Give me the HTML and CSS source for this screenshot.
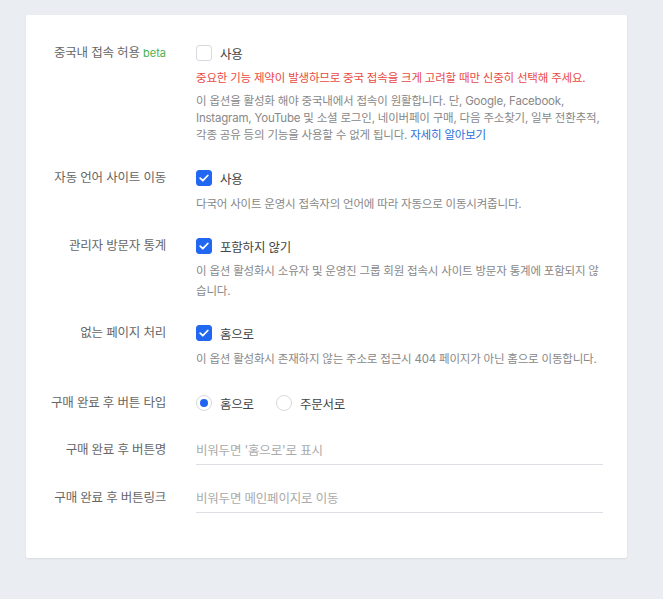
FILE: index.html
```html
<!DOCTYPE html>
<html lang="ko">
<head>
<meta charset="utf-8">
<link rel="stylesheet" href="styles.css">
</head>
<body>
<div class="page">
  <div class="card">
    <div class="row r1">
      <div class="label">중국내 접속 허용 <span class="beta">beta</span></div>
      <div class="control">
        <label class="check"><span class="box"></span><span class="ctext">사용</span></label>
        <p class="warn">중요한 기능 제약이 발생하므로 중국 접속을 크게 고려할 때만 신중히 선택해 주세요.</p>
        <p class="desc tight">이 옵션을 활성화 해야 중국내에서 접속이 원활합니다. 단, Google, Facebook, Instagram, YouTube 및 소셜 로그인, 네이버페이 구매, 다음 주소찾기, 일부 전환추적, 각종 공유 등의 기능을 사용할 수 없게 됩니다. <a class="link" href="#">자세히 알아보기</a></p>
      </div>
    </div>
    <div class="row r2">
      <div class="label">자동 언어 사이트 이동</div>
      <div class="control">
        <label class="check"><span class="box on"><svg viewBox="0 0 16 16" width="16" height="16"><path d="M4.2 8.2l2.6 2.5 5-5.2" fill="none" stroke="#fff" stroke-width="1.8" stroke-linecap="round" stroke-linejoin="round"/></svg></span><span class="ctext">사용</span></label>
        <p class="desc">다국어 사이트 운영시 접속자의 언어에 따라 자동으로 이동시켜줍니다.</p>
      </div>
    </div>
    <div class="row r3">
      <div class="label">관리자 방문자 통계</div>
      <div class="control">
        <label class="check"><span class="box on"><svg viewBox="0 0 16 16" width="16" height="16"><path d="M4.2 8.2l2.6 2.5 5-5.2" fill="none" stroke="#fff" stroke-width="1.8" stroke-linecap="round" stroke-linejoin="round"/></svg></span><span class="ctext">포함하지 않기</span></label>
        <p class="desc wide">이 옵션 활성화시 소유자 및 운영진 그룹 회원 접속시 사이트 방문자 통계에 포함되지 않습니다.</p>
      </div>
    </div>
    <div class="row r4">
      <div class="label">없는 페이지 처리</div>
      <div class="control">
        <label class="check"><span class="box on"><svg viewBox="0 0 16 16" width="16" height="16"><path d="M4.2 8.2l2.6 2.5 5-5.2" fill="none" stroke="#fff" stroke-width="1.8" stroke-linecap="round" stroke-linejoin="round"/></svg></span><span class="ctext">홈으로</span></label>
        <p class="desc">이 옵션 활성화시 존재하지 않는 주소로 접근시 404 페이지가 아닌 홈으로 이동합니다.</p>
      </div>
    </div>
    <div class="row radio-row">
      <div class="label">구매 완료 후 버튼 타입</div>
      <div class="control radios">
        <label class="radio"><span class="dot on"></span><span class="ctext">홈으로</span></label>
        <label class="radio"><span class="dot"></span><span class="ctext">주문서로</span></label>
      </div>
    </div>
    <div class="row input-row">
      <div class="label">구매 완료 후 버튼명</div>
      <div class="control"><input class="field" type="text" placeholder="비워두면 '홈으로'로 표시"></div>
    </div>
    <div class="row input-row">
      <div class="label">구매 완료 후 버튼링크</div>
      <div class="control"><input class="field" type="text" placeholder="비워두면 메인페이지로 이동"></div>
    </div>
  </div>
</div>
</body>
</html>
```
FILE: styles.css
```css
* { box-sizing: border-box; }
html, body { margin: 0; padding: 0; }
body {
  background: #eaedf2;
  font-family: Inter, "Noto Sans CJK KR", sans-serif;
  color: #333;
}
.page {
  padding: 15px 36px 42px 26px;
}
.card {
  width: 601px;
  background: #fff;
  box-shadow: 0 1px 2px rgba(0, 0, 0, 0.08);
  border-radius: 2px;
  padding: 29px 24px 45px 0;
}
.row {
  display: grid;
  grid-template-columns: 140px 1fr;
  column-gap: 30px;
  margin-bottom: 25px;
}
.r2 { margin-bottom: 24px; }
.r3 { margin-bottom: 23px; }
.r4 { margin-bottom: 26px; }
.label {
  text-align: right;
  font-size: 12.5px;
  line-height: 18px;
  color: #666;
  letter-spacing: -0.2px;
}
.beta {
  color: #4cb052;
  font-size: 11px;
  letter-spacing: 0;
}
.control { min-width: 0; }
.check, .radio {
  display: flex;
  align-items: center;
  height: 18px;
}
.box {
  width: 16px;
  height: 16px;
  border: 1px solid #d6d9de;
  border-radius: 3px;
  background: #fff;
  display: flex;
}
.box.on {
  background: #2167f2;
  border-color: #2167f2;
}
.box svg { margin: -1px; }
.ctext {
  margin-left: 8px;
  font-size: 12.5px;
  color: #444;
  letter-spacing: -0.2px;
}
p { margin: 0; }
.warn {
  margin-top: 8px;
  font-size: 11.5px;
  line-height: 17px;
  color: #ea4a44;
  letter-spacing: -0.2px;
}
.desc {
  margin-top: 9px;
  font-size: 11.5px;
  line-height: 17px;
  color: #888;
  letter-spacing: -0.2px;
}
.desc.tight { margin-top: 6px; }
.desc.wide { line-height: 20px; margin-top: 6px; }
.link { color: #2a6fd8; text-decoration: none; }
.radios { display: flex; gap: 22px; }
.dot {
  width: 16px;
  height: 16px;
  border: 1px solid #d6d9de;
  border-radius: 50%;
  background: #fff;
  position: relative;
}
.dot.on::after {
  content: "";
  position: absolute;
  left: 3px;
  top: 3px;
  width: 8px;
  height: 8px;
  border-radius: 50%;
  background: #1f63f0;
}
.radio-row { margin-bottom: 23px; }
.input-row { margin-bottom: 18px; }
.input-row .label { line-height: 30px; }
.field {
  display: block;
  width: 100%;
  height: 30px;
  border: 0;
  border-bottom: 1px solid #dcdfe3;
  padding: 2px 0 0 0;
  font-family: inherit;
  font-size: 12.5px;
  color: #333;
  outline: none;
  letter-spacing: -0.2px;
}
.field::placeholder { color: #aaa; }
.row:last-child { margin-bottom: 0; }
```
